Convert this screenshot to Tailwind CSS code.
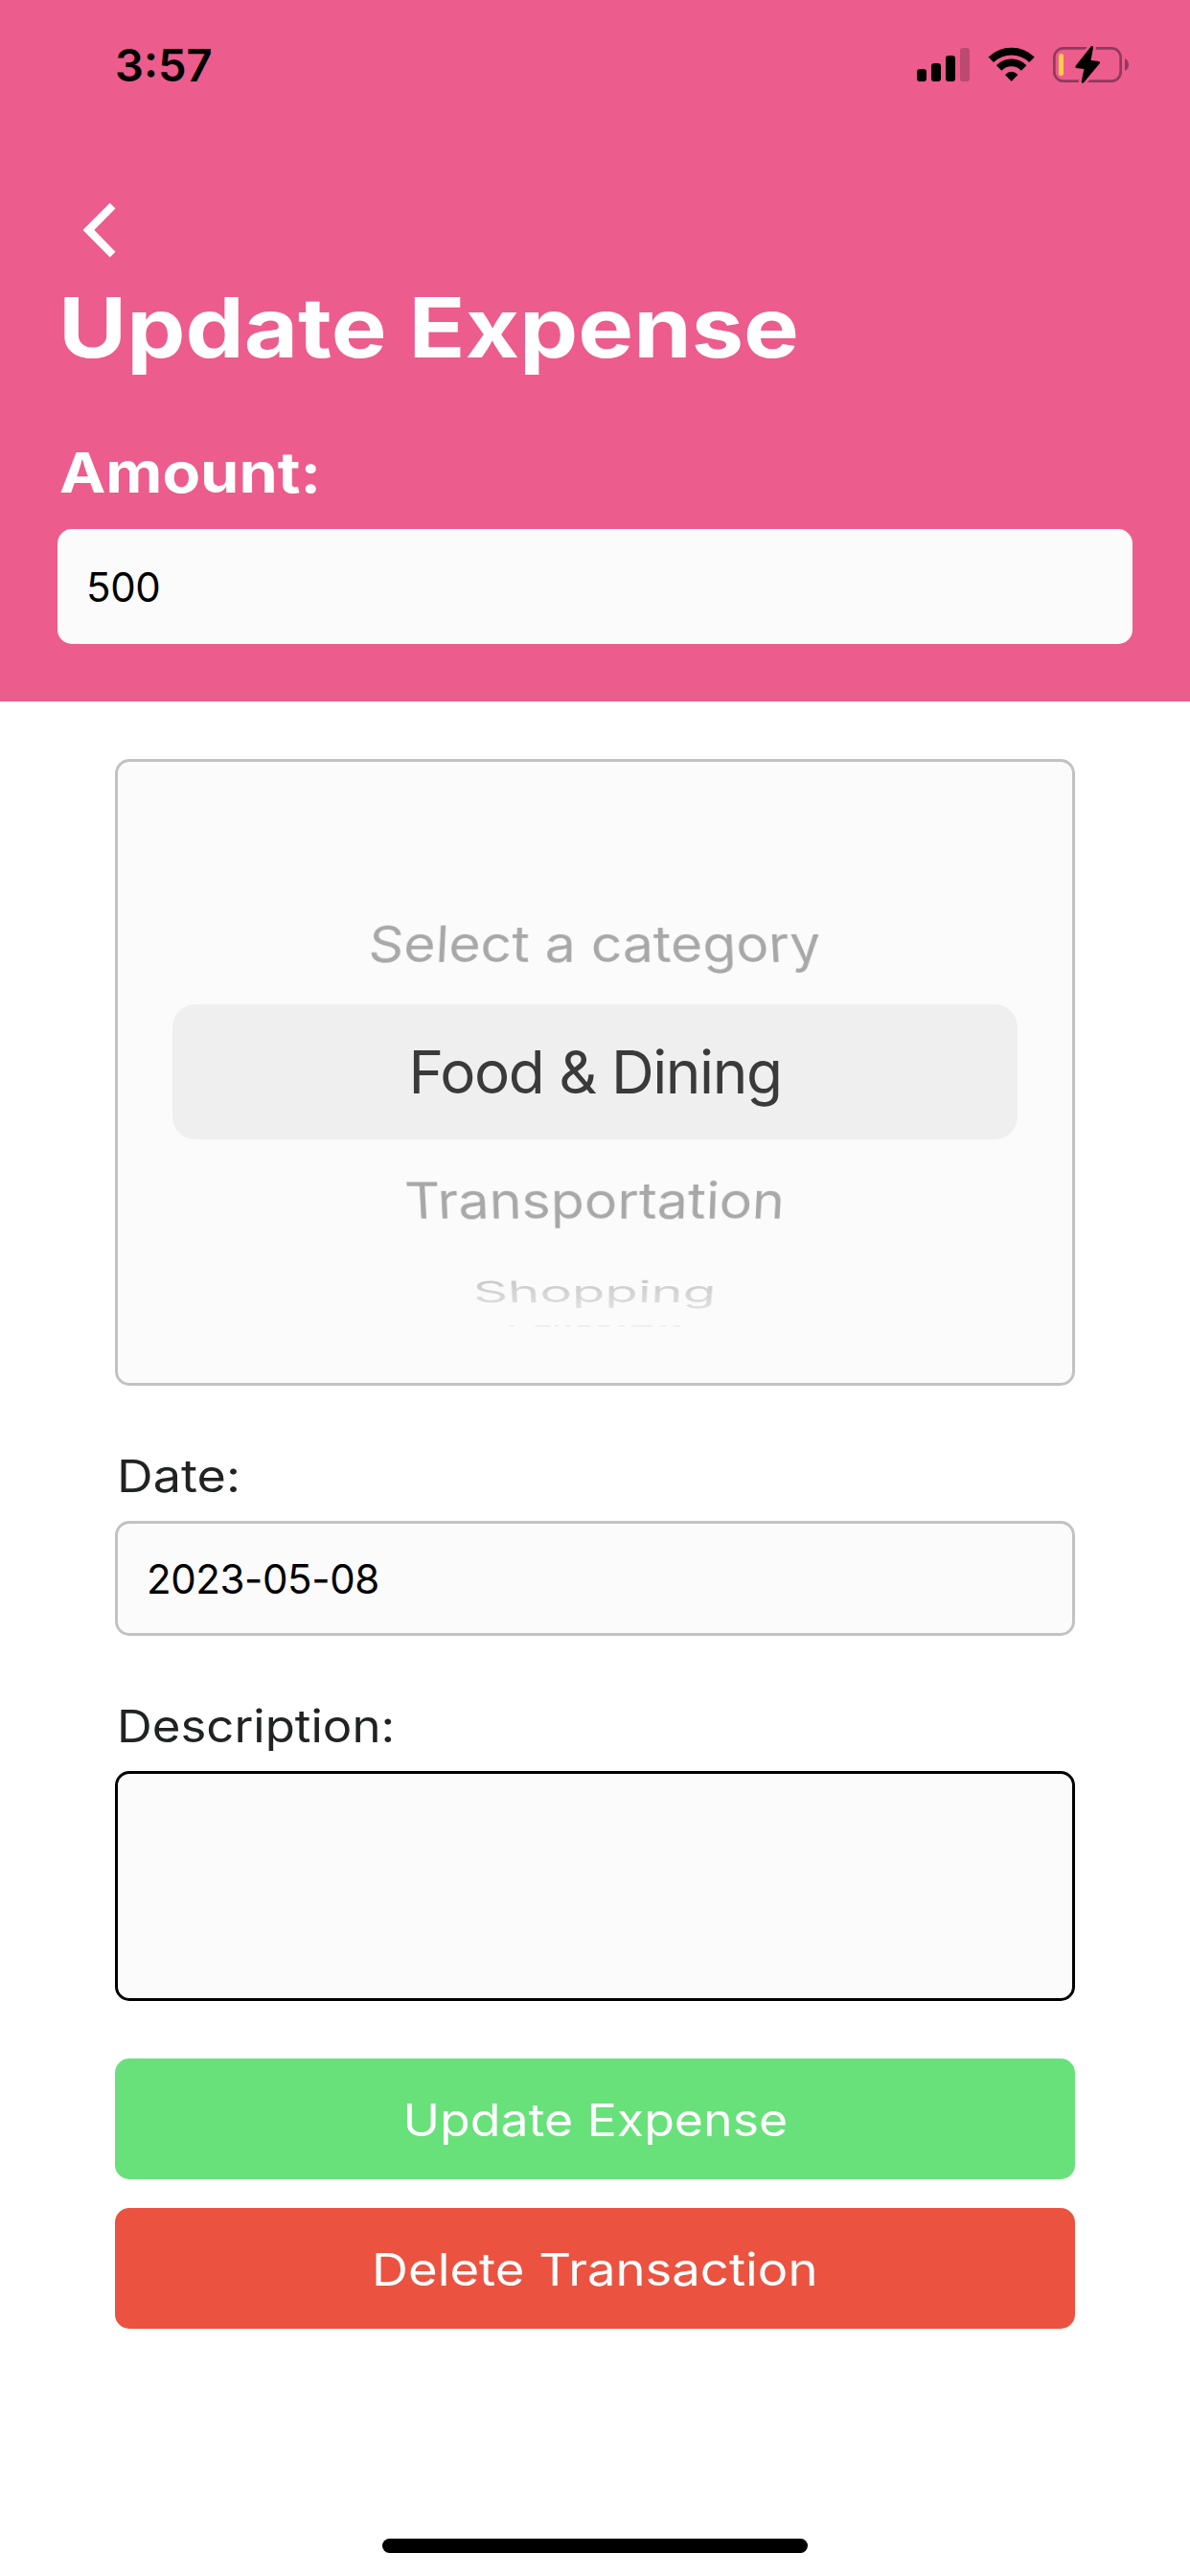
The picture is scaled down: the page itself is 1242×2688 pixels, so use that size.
<!DOCTYPE html>
<html lang="en">
<head>
<meta charset="utf-8">
<meta name="viewport" content="width=device-width, initial-scale=1">
<title>Update Expense</title>
<script src="https://cdn.jsdelivr.net/npm/@tailwindcss/browser@4"></script>
</head>
<body class="bg-white">
<div class="flex h-[2688px] w-[1242px] flex-col overflow-hidden bg-white font-['Inter',sans-serif] text-black">

  <header class="flex h-[732px] flex-col bg-[#ec5c8c]">
    <!-- Status bar -->
    <div class="flex h-[136px] items-center justify-between pr-8 pl-[120px]">
      <span class="text-[47px] leading-[136px] font-[570]">3:57</span>
      <svg class="mt-1 h-20 w-[280px]" viewBox="0 0 840 240" fill="none">
        <rect x="81" y="126" width="30" height="39" rx="10" fill="#000"/>
        <rect x="126" y="108" width="30" height="57" rx="10" fill="#000"/>
        <rect x="171" y="84" width="30" height="81" rx="10" fill="#000"/>
        <rect x="216" y="60" width="30" height="105" rx="10" fill="#000" fill-opacity=".2"/>
        <path d="M313 97a91 91 0 0 1 128 0" stroke="#000" stroke-width="23"/>
        <path d="M338 123a54 54 0 0 1 78 0" stroke="#000" stroke-width="23"/>
        <path d="M357 144q20-19 40 0L379 163q-2 2-4 0z" fill="#000"/>
        <rect x="511" y="61" width="208" height="103" rx="29" stroke="#913a5b" stroke-width="8"/>
        <path d="M732 93q12 7 12 19.500t-12 19.500z" fill="#913a5b"/>
        <rect x="525" y="78" width="15" height="69" rx="7" fill="#f9cf46"/>
        <path d="M629 58L580 119L608 124L600 166L650 107L622 102Z" fill="#ec5c8c" stroke="#ec5c8c" stroke-width="25" stroke-linejoin="round"/>
        <path d="M629 58L581 119L609 123L600 166L650 106L621 102Z" fill="#000" stroke="#000" stroke-width="8" stroke-linejoin="round"/>
      </svg>
    </div>

    <div class="flex flex-col px-[60px] pt-[68px]">
      <svg class="size-[72px]" viewBox="0 0 72 72"><path fill="#fff" d="M26.500 36L54.700 7.700L60.500 13.500L38.300 36L60.500 58.700L54.700 64.500Z"/></svg>
      <h1 class="mt-[11px] ml-[1px] origin-left scale-x-[1.117] self-start text-[87px] leading-[110px] font-bold whitespace-nowrap text-white">Update Expense</h1>
      <label class="mt-[61px] ml-[2px] origin-left scale-x-[1.116] self-start text-[58px] leading-[70px] font-bold whitespace-nowrap text-white">Amount:</label>
      <div class="mt-6 flex h-[120px] items-center rounded-[15px] bg-[#fbfbfb] px-[30px] text-[42px] tracking-[-0.4px]">500</div>
    </div>
  </header>

  <main class="flex flex-col px-[120px] pt-[60px]">
    <!-- Category wheel -->
    <div class="flex h-[654px] flex-col items-center overflow-hidden rounded-[15px] border-[3px] border-[#c1c2c4] bg-[#fbfbfb] pt-[127px] text-[62px] leading-none whitespace-nowrap">
      <div class="flex h-[126px] items-center text-[#a8a8a8]"><span class="[transform:perspective(2000px)_rotateX(32deg)_scaleX(0.918)]">Select a category</span></div>
      <div class="flex h-[141px] w-[882px] items-center justify-center rounded-3xl bg-[#efefef] tracking-[-1.400px] text-[#3a3a3a]">Food &amp; Dining</div>
      <div class="flex h-[127px] items-center text-[#a8a8a8]"><span class="[transform:perspective(2000px)_rotateX(-32deg)_scaleX(0.926)]">Transportation</span></div>
      <div class="flex h-[64px] items-center"><span class="bg-linear-to-b from-[#c4c4c4] to-[#e2e2e2] bg-clip-text py-2.5 text-transparent [transform:perspective(2500px)_rotateX(-60.300deg)_scaleX(0.908)]">Shopping</span></div>
      <!-- Top edge of the next row as it turns out of view -->
      <svg class="mt-[3px] h-1 w-[180px] shrink-0" viewBox="0 0 540 12" fill="#e9e9e9">
        <path d="M0 0h17v4h-17zM83 0h47v4h-47zM143 0h14v4h-14zM177 0h18v4h-18zM215 0h40v4h-40zM280 0h35v4h-35zM345 0h18v4h-18zM385 0h65v4h-65zM473 0h20v4h-20zM515 0h23v4h-23z"/>
      </svg>
    </div>

    <label class="mt-[65px] ml-[2px] origin-left scale-x-[1.122] self-start text-[46.500px] leading-[58px] font-[430] text-[#212322]">Date:</label>
    <div class="mt-[18px] flex h-[120px] items-center rounded-[15px] border-[3px] border-[#c1c2c4] bg-[#fbfbfb] px-[30px] text-[42px] tracking-[-0.4px]">2023-05-08</div>

    <label class="mt-[65px] ml-[2px] origin-left scale-x-[1.095] self-start text-[46.500px] leading-[58px] font-[430] text-[#212322]">Description:</label>
    <div class="mt-[18px] h-[240px] rounded-[15px] border-[3px] border-black bg-[#fbfbfb]"></div>

    <button class="mt-[60px] flex h-[126px] items-center justify-center rounded-[15px] bg-[#68e17a] pt-[3px] text-[46.500px] text-white"><span class="scale-x-[1.114]">Update Expense</span></button>
    <button class="mt-[30px] flex h-[126px] items-center justify-center rounded-[15px] bg-[#eb5240] pt-[3px] text-[46.500px] text-white"><span class="scale-x-[1.131]">Delete Transaction</span></button>
  </main>

  <div class="mt-[219px] h-[15px] w-[444px] shrink-0 self-center rounded-full bg-black"></div>
</div>
</body>
</html>
